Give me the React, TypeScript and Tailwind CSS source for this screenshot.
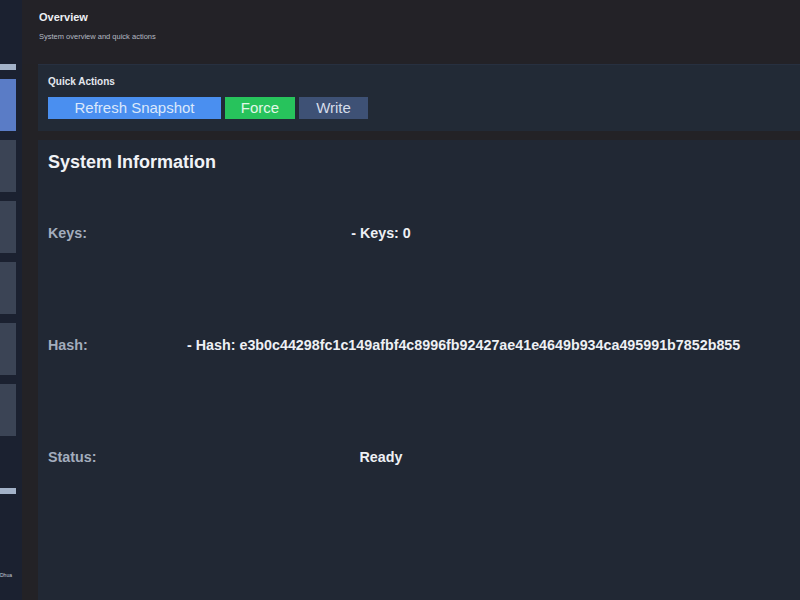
import React from 'react';

type InfoRow = {
  label: string;
  value: string;
};

const rows: InfoRow[] = [
  { label: 'Keys:', value: '- Keys: 0' },
  {
    label: 'Hash:',
    value:
      '- Hash: e3b0c44298fc1c149afbf4c8996fb92427ae41e4649b934ca495991b7852b855',
  },
  { label: 'Status:', value: 'Ready' },
];

const Sidebar = () => {
  return (
    <div className="w-[22px] shrink-0 bg-[#1b2130] flex flex-col pt-[64px]">
      <div className="w-[16px] h-[6px] bg-[#a3b2c8]" />
      <div className="flex flex-col gap-[9px] mt-[9px]">
        <div className="w-[16px] h-[52px] bg-[#5a7cc6]" />
        <div className="w-[16px] h-[52px] bg-[#3b4455]" />
        <div className="w-[16px] h-[52px] bg-[#3b4455]" />
        <div className="w-[16px] h-[52px] bg-[#3b4455]" />
        <div className="w-[16px] h-[52px] bg-[#3b4455]" />
        <div className="w-[16px] h-[52px] bg-[#3b4455]" />
      </div>
      <div className="w-[16px] h-[6px] bg-[#a3b2c8] mt-[52px]" />
      <div className="mt-[78px] w-[16px] overflow-hidden whitespace-nowrap text-[5px] leading-[6px] text-[#c5ccd8]">
        Dhua
      </div>
    </div>
  );
};

const App = () => {
  return (
    <div
      className="w-[800px] h-[600px] overflow-hidden flex bg-[#232226]"
      style={{ fontFamily: '"Liberation Sans", Arial, sans-serif' }}
    >
      <Sidebar />

      <div className="flex-1 flex flex-col min-w-0">
        <div className="h-[64px] shrink-0 pl-[17px] pt-[10px] bg-[#232227]">
          <h1 className="text-[11px] leading-[15px] font-bold text-[#eef0f4]">
            Overview
          </h1>
          <p className="text-[7.5px] leading-[10px] mt-[7px] text-[#b4b9c2]">
            System overview and quick actions
          </p>
        </div>

        <div className="ml-[16px] flex flex-col gap-[9px] flex-1 min-h-0">
          <div className="bg-[#222a36] border-t border-[#273040] pt-[11px] px-[10px] pb-[12px]">
            <h2 className="text-[10px] leading-[12px] font-bold text-[#e3e7ee]">
              Quick Actions
            </h2>
            <div className="flex gap-[4px] mt-[9px]">
              <button className="w-[173px] h-[22px] bg-[#4a8ff0] text-[#dbe8fb] text-[15px] leading-[22px]">
                Refresh Snapshot
              </button>
              <button className="w-[70px] h-[22px] bg-[#27c35c] text-[#e2f7e8] text-[15px] leading-[22px]">
                Force
              </button>
              <button className="w-[69px] h-[22px] bg-[#3e5175] text-[#d5dcea] text-[15px] leading-[22px]">
                Write
              </button>
            </div>
          </div>

          <div className="flex-1 bg-[#212834] pt-[10px] px-[10px]">
            <h2 className="text-[18px] leading-[24px] font-bold text-[#f0f2f6]">
              System Information
            </h2>
            <div className="mt-[3px] flex flex-col">
              {rows.map((row) => (
                <div
                  key={row.label}
                  className="h-[112px] flex items-center text-[14.3px] leading-[20px] font-bold"
                >
                  <span className="w-[139px] shrink-0 text-[#a3adbd]">
                    {row.label}
                  </span>
                  <span className="w-[388px] shrink-0 text-center whitespace-nowrap text-[#eef0f4]">
                    {row.value}
                  </span>
                </div>
              ))}
            </div>
          </div>
        </div>
      </div>
    </div>
  );
};

export default App;
